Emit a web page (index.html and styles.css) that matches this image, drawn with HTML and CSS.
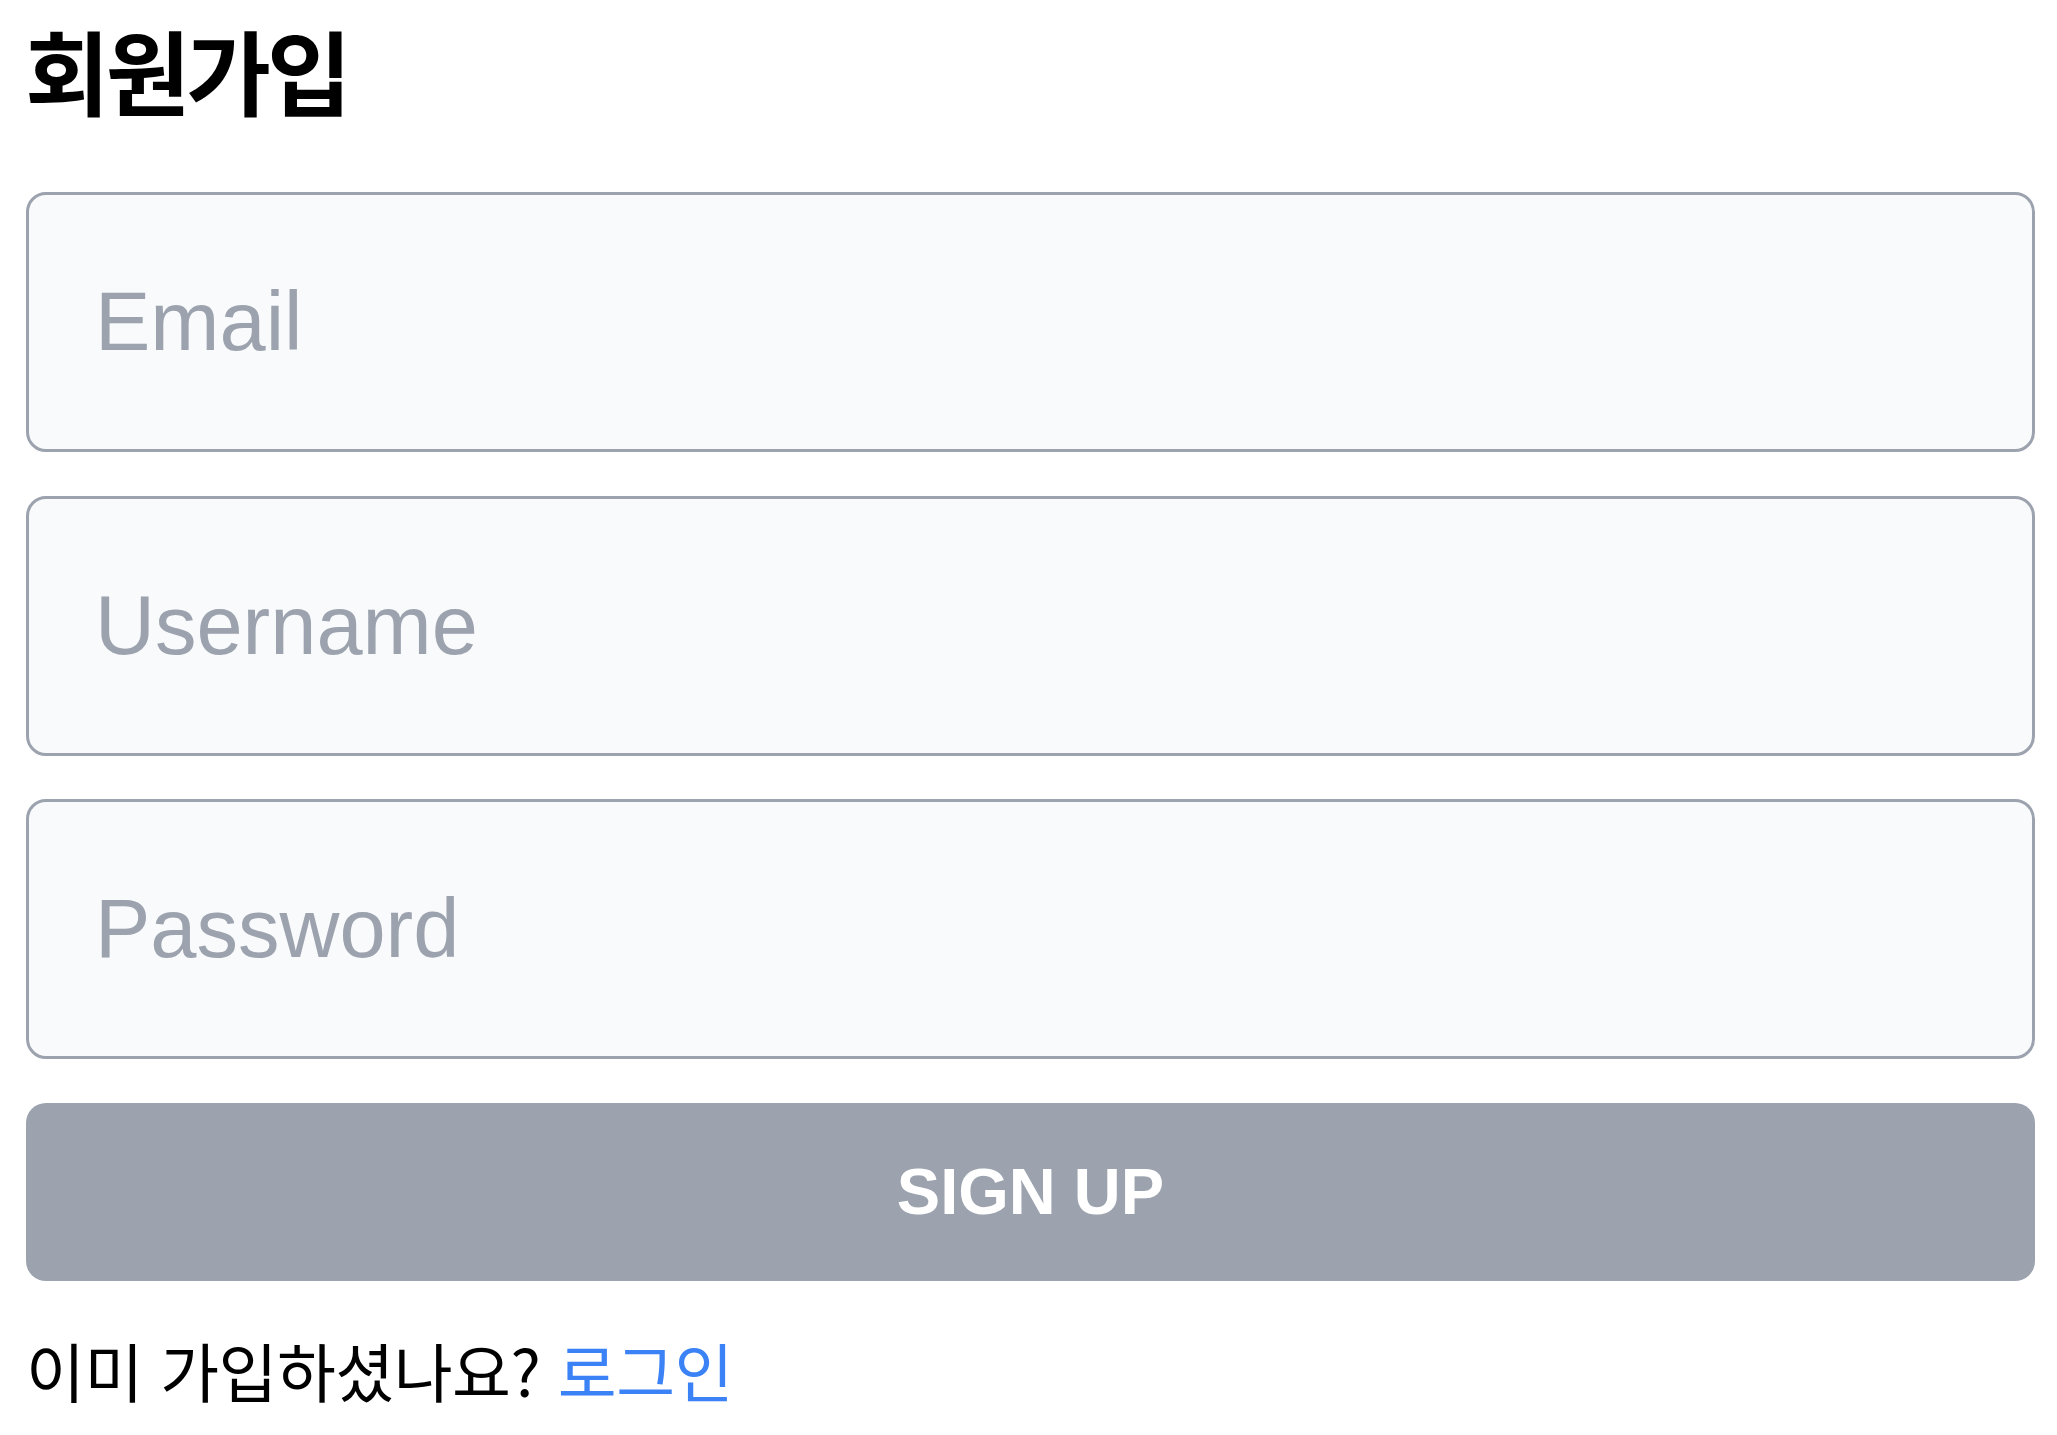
FILE: index.html
```html
<!DOCTYPE html>
<html lang="ko">
<head>
<meta charset="utf-8">
<title>회원가입</title>
<link rel="stylesheet" href="styles.css">
</head>
<body>
<main class="page">
  <h1 class="title">회원가입</h1>
  <form class="form">
    <input class="field" type="email" placeholder="Email">
    <input class="field" type="text" placeholder="Username">
    <input class="field" type="password" placeholder="Password">
    <button class="submit" type="button">Sign up</button>
  </form>
  <p class="footer">이미 가입하셨나요? <a class="link" href="#">로그인</a></p>
</main>
</body>
</html>
```
FILE: styles.css
```css
html, body {
  margin: 0;
  padding: 0;
  background: #ffffff;
}
body {
  font-family: "Liberation Sans", "Noto Sans CJK KR", sans-serif;
  color: #000000;
}
.page {
  width: 2009px;
  margin-left: 26px;
  display: flex;
  flex-direction: column;
}
.title {
  margin: 14px 0 0 -1px;
  font-family: "Noto Sans CJK KR", sans-serif;
  font-size: 92px;
  font-weight: 700;
  line-height: 110px;
  letter-spacing: -4px;
}
.form {
  margin-top: 68px;
  display: flex;
  flex-direction: column;
  gap: 43.5px;
}
.field {
  box-sizing: border-box;
  width: 100%;
  height: 260px;
  border: 3px solid #9ca3af;
  border-radius: 20px;
  background: #f9fafb;
  padding: 0 0 0 66px;
  font-family: "Liberation Sans", sans-serif;
  font-size: 83px;
  color: #111827;
  outline: none;
}
.field::placeholder {
  color: #9ca3af;
  opacity: 1;
}
.submit {
  box-sizing: border-box;
  width: 100%;
  height: 178px;
  border: none;
  border-radius: 20px;
  background: #9ca3af;
  color: #ffffff;
  font-family: "Liberation Sans", sans-serif;
  font-size: 65px;
  font-weight: 700;
  text-transform: uppercase;
  cursor: pointer;
}
.footer {
  margin: 48px 0 0 0;
  font-family: "Noto Sans CJK KR", sans-serif;
  font-size: 64px;
  line-height: 80px;
  letter-spacing: -0.5px;
}
.link {
  color: #3b82f6;
  text-decoration: none;
}
```
